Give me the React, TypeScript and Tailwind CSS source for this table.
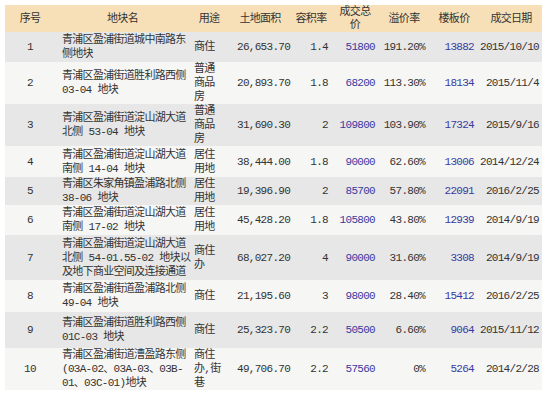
type Row = {
  no: string;
  name: string[];
  use: string[];
  area: string;
  far: string;
  total: string;
  premium: string;
  floor: string;
  date: string;
  h: string;
};

const rows: Row[] = [
  { no: '1', name: ['青浦区盈浦街道城中南路东', '侧地块'], use: ['商住'], area: '26,653.70', far: '1.4', total: '51800', premium: '191.20%', floor: '13882', date: '2015/10/10', h: 'h-[30px]' },
  { no: '2', name: ['青浦区盈浦街道胜利路西侧', '03-04 地块'], use: ['普通', '商品', '房'], area: '20,893.70', far: '1.8', total: '68200', premium: '113.30%', floor: '18134', date: '2015/11/4', h: 'h-[41px]' },
  { no: '3', name: ['青浦区盈浦街道淀山湖大道', '北侧 53-04 地块'], use: ['普通', '商品', '房'], area: '31,690.30', far: '2', total: '109800', premium: '103.90%', floor: '17324', date: '2015/9/16', h: 'h-[42px]' },
  { no: '4', name: ['青浦区盈浦街道淀山湖大道', '南侧 14-04 地块'], use: ['居住', '用地'], area: '38,444.00', far: '1.8', total: '90000', premium: '62.60%', floor: '13006', date: '2014/12/24', h: 'h-[31px]' },
  { no: '5', name: ['青浦区朱家角镇盈浦路北侧', '38-06 地块'], use: ['居住', '用地'], area: '19,396.90', far: '2', total: '85700', premium: '57.80%', floor: '22091', date: '2016/2/25', h: 'h-[28px]' },
  { no: '6', name: ['青浦区盈浦街道淀山湖大道', '南侧 17-02 地块'], use: ['居住', '用地'], area: '45,428.20', far: '1.8', total: '105800', premium: '43.80%', floor: '12939', date: '2014/9/19', h: 'h-[30px]' },
  { no: '7', name: ['青浦区盈浦街道淀山湖大道', '北侧 54-01.55-02 地块以', '及地下商业空间及连接通道'], use: ['商住', '办'], area: '68,027.20', far: '4', total: '90000', premium: '31.60%', floor: '3308', date: '2014/9/19', h: 'h-[45px]' },
  { no: '8', name: ['青浦区盈浦街道盈浦路北侧', '49-04 地块'], use: ['商住'], area: '21,195.60', far: '3', total: '98000', premium: '28.40%', floor: '15412', date: '2016/2/25', h: 'h-[32px]' },
  { no: '9', name: ['青浦区盈浦街道胜利路西侧', '01C-03 地块'], use: ['商住'], area: '25,323.70', far: '2.2', total: '50500', premium: '6.60%', floor: '9064', date: '2015/11/12', h: 'h-[36px]' },
  { no: '10', name: ['青浦区盈浦街道漕盈路东侧', '(03A-02、03A-03、03B-', '01、03C-01)地块'], use: ['商住', '办,街', '巷'], area: '49,706.70', far: '2.2', total: '57560', premium: '0%', floor: '5264', date: '2014/2/28', h: 'h-[41px]' },
];

function Lines({ lines }: { lines: string[] }) {
  return (
    <>
      {lines.map((line, i) => (
        <div key={i} className="whitespace-nowrap">{line}</div>
      ))}
    </>
  );
}

export default function App() {
  return (
    <div className="h-[401px] w-[550px] bg-white pl-[5px] pt-[5px]">
      <table
        className="w-[537px] table-fixed border-collapse text-[11px] leading-[14px] tracking-[-0.7px] text-[#333]"
        style={{ fontFamily: '"Liberation Mono", "Noto Sans CJK SC", monospace' }}
      >
        <colgroup>
          <col className="w-[50px]" />
          <col className="w-[135px]" />
          <col className="w-[38px]" />
          <col className="w-[64px]" />
          <col className="w-[38px]" />
          <col className="w-[50px]" />
          <col className="w-[48px]" />
          <col className="w-[52px]" />
          <col className="w-[62px]" />
        </colgroup>
        <thead>
          <tr className="h-[27px] bg-[#f7e0b8] text-center font-normal">
            <th className="p-0 font-normal">序号</th>
            <th className="p-0 font-normal">地块名</th>
            <th className="p-0 font-normal">用途</th>
            <th className="p-0 font-normal">土地面积</th>
            <th className="p-0 font-normal">容积率</th>
            <th className="p-0 font-normal leading-[13px]">
              <div>成交总</div>
              <div>价</div>
            </th>
            <th className="p-0 font-normal">溢价率</th>
            <th className="p-0 font-normal">楼板价</th>
            <th className="p-0 font-normal">成交日期</th>
          </tr>
        </thead>
        <tbody>
          {rows.map((row, i) => (
            <tr key={row.no} className={`${row.h} ${i % 2 === 0 ? 'bg-[#e7e7e7]' : 'bg-[#f6f6f5]'}`}>
              <td className="p-0 text-center">{row.no}</td>
              <td className="py-0 pl-[7px] pr-0 text-left">
                <Lines lines={row.name} />
              </td>
              <td className="py-0 pl-[4px] pr-0 text-left">
                <Lines lines={row.use} />
              </td>
              <td className="py-0 pl-[9px] pr-0 text-left">{row.area}</td>
              <td className="py-0 pl-0 pr-[2px] text-right">{row.far}</td>
              <td className="py-0 pl-0 pr-[5px] text-right text-[#3a3aa0]">{row.total}</td>
              <td className="py-0 pl-0 pr-[3px] text-right">{row.premium}</td>
              <td className="py-0 pl-0 pr-[6px] text-right text-[#3a3aa0]">{row.floor}</td>
              <td className="py-0 pl-0 pr-[3px] text-right">{row.date}</td>
            </tr>
          ))}
        </tbody>
      </table>
    </div>
  );
}
